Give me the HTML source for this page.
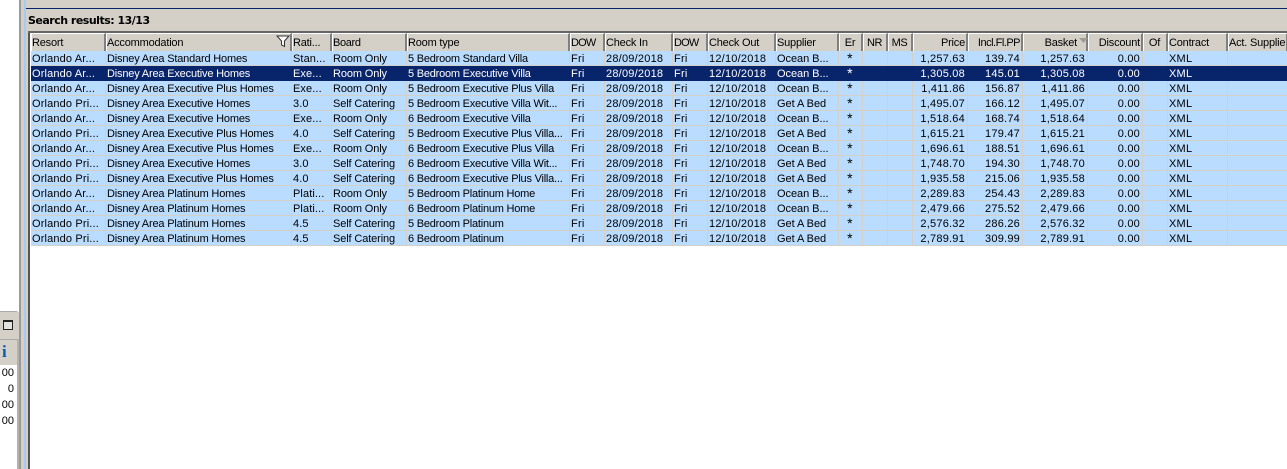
<!DOCTYPE html>
<html><head><meta charset="utf-8"><style>
html,body{margin:0;padding:0;background:#fff}
#p{position:relative;width:1287px;height:469px;overflow:hidden;background:#fff;font:11px "Liberation Sans",sans-serif;color:#000}
.a{position:absolute}
.c{position:absolute;white-space:nowrap;overflow:hidden;height:15px;line-height:17px;padding:0 2px 0 1px;box-sizing:border-box;border-right:1px solid #d4d0c8;border-bottom:1px solid #d4d0c8;letter-spacing:.22px}
.h{position:absolute;top:33px;height:18px;line-height:18px;box-sizing:border-box;background:#d4d0c8;border-top:1px solid #fff;border-left:1px solid #fff;border-right:2px solid #808080;padding:0 1px 0 0;white-space:nowrap;overflow:hidden;letter-spacing:-.2px}
.r{text-align:right}.m{text-align:center}
.s{background:#08246b;color:#fff}
.b{background:#b9dcff}
</style></head><body><div id="p">
<div class="a" style="left:19px;top:0;width:2px;height:469px;background:#9c9a96"></div>
<div class="a" style="left:21px;top:0;width:3px;height:469px;background:#d4d0c8"></div>
<div class="a" style="left:24px;top:0;width:2px;height:469px;background:#a6caf0"></div>
<div class="a" style="left:26px;top:0;width:2px;height:469px;background:#d4d0c8"></div>
<div class="a" style="left:28px;top:31px;width:2px;height:438px;background:#555"></div>
<div class="a" style="left:26px;top:0;width:1261px;height:31px;background:#d4d0c8"></div>
<div class="a" style="left:26px;top:8px;width:1261px;height:1px;background:#08246b"></div>
<div class="a" style="left:28px;top:14px;font:bold 11px/14px 'DejaVu Sans',sans-serif;letter-spacing:-.5px">Search results: 13/13</div>
<div class="a" style="left:28px;top:31px;width:1259px;height:2px;background:#666"></div>
<div class="a" style="left:0;top:311px;width:19px;height:158px;background:#d4d0c8;border-top:1px solid #aaa;box-sizing:border-box;border-top-right-radius:3px"></div>
<div class="a" style="left:0;top:339px;width:17px;height:1px;background:#aaa"></div>
<div class="a" style="left:17px;top:339px;width:2px;height:130px;background:#b4b2ae"></div>
<div class="a" style="left:0;top:365px;width:17px;height:104px;background:#fff"></div>
<div class="a" style="left:3px;top:320px;width:8px;height:7px;border:1px solid #222;border-top-width:2px;background:#e4e2de"></div>
<div class="a" style="left:2px;top:342px;font:bold 17px/20px 'Liberation Serif',serif;color:#0a5cb0">i</div>
<div class="a r" style="left:0;top:366px;width:14px;line-height:15px">00</div>
<div class="a r" style="left:0;top:382px;width:14px;line-height:15px">0</div>
<div class="a r" style="left:0;top:398px;width:14px;line-height:15px">00</div>
<div class="a r" style="left:0;top:414px;width:14px;line-height:15px">00</div>
<div id="t"></div>
<svg class="a" style="left:276px;top:35px" width="14" height="13" viewBox="0 0 14 13"><path d="M1 1H13L8.5 6V11.500L5.500 10V6Z" fill="#fff" stroke="#333"/></svg>
<svg class="a" style="left:1079px;top:38px" width="9" height="6" viewBox="0 0 9 6"><path d="M0 0H9L4.500 5Z" fill="#a09c94"/></svg>
</div>
<script>
var X=[30,105,291,331,406,569,604,672,707,775,838,862,887,912,967,1022,1087,1142,1167,1227,1287];
var H=["Resort","Accommodation","Rati...","Board","Room type","DOW","Check In","DOW","Check Out","Supplier","Er","NR","MS","Price","Incl.Fl.PP","Basket","Discount","Of","Contract","Act. Supplier"];
var A={10:"m",11:"m",12:"m",13:"r",14:"r",15:"r",16:"r",17:"m"};
var LS={0:.15,1:-.18,2:.1,3:-.12,4:-.22,9:-.05};
var HS={3:-.35,5:-.8,7:-.8,11:-.4,12:-.4,14:-.5};
var R=[
["Orlando Ar...","Disney Area Standard Homes","Stan...","Room Only","5 Bedroom Standard Villa","Ocean B...","1,257.63","139.74"],
["Orlando Ar...","Disney Area Executive Homes","Exe...","Room Only","5 Bedroom Executive Villa","Ocean B...","1,305.08","145.01"],
["Orlando Ar...","Disney Area Executive Plus Homes","Exe...","Room Only","5 Bedroom Executive Plus Villa","Ocean B...","1,411.86","156.87"],
["Orlando Pri...","Disney Area Executive Homes","3.0","Self Catering","5 Bedroom Executive Villa Wit...","Get A Bed","1,495.07","166.12"],
["Orlando Ar...","Disney Area Executive Homes","Exe...","Room Only","6 Bedroom Executive Villa","Ocean B...","1,518.64","168.74"],
["Orlando Pri...","Disney Area Executive Plus Homes","4.0","Self Catering","5 Bedroom Executive Plus Villa...","Get A Bed","1,615.21","179.47"],
["Orlando Ar...","Disney Area Executive Plus Homes","Exe...","Room Only","6 Bedroom Executive Plus Villa","Ocean B...","1,696.61","188.51"],
["Orlando Pri...","Disney Area Executive Homes","3.0","Self Catering","6 Bedroom Executive Villa Wit...","Get A Bed","1,748.70","194.30"],
["Orlando Pri...","Disney Area Executive Plus Homes","4.0","Self Catering","6 Bedroom Executive Plus Villa...","Get A Bed","1,935.58","215.06"],
["Orlando Ar...","Disney Area Platinum Homes","Plati...","Room Only","5 Bedroom Platinum Home","Ocean B...","2,289.83","254.43"],
["Orlando Ar...","Disney Area Platinum Homes","Plati...","Room Only","6 Bedroom Platinum Home","Ocean B...","2,479.66","275.52"],
["Orlando Pri...","Disney Area Platinum Homes","4.5","Self Catering","5 Bedroom Platinum","Get A Bed","2,576.32","286.26"],
["Orlando Pri...","Disney Area Platinum Homes","4.5","Self Catering","6 Bedroom Platinum","Get A Bed","2,789.91","309.99"]];
var o="";
for(var i=0;i<20;i++){
 var w=X[i+1]-X[i];
 o+='<div class="h '+(A[i]||"")+'" style="left:'+(X[i]+1)+'px;width:'+w+'px'+(i==15?';padding-right:9px':'')+(HS[i]?';letter-spacing:'+HS[i]+'px':'')+'">'+H[i]+'</div>';
}
R.forEach(function(r,j){
 var v=[r[0],r[1],r[2],r[3],r[4],"Fri","28/09/2018","Fri","12/10/2018",r[5],"*","","",r[6],r[7],r[6],"0.00","","XML",""];
 var y=51+j*15;
 for(var i=0;i<20;i++){
  var w=X[i+1]-X[i];
  o+='<div class="c '+(j==1?"s ":"b ")+(A[i]||"")+'" style="left:'+(X[i]+1)+'px;top:'+y+'px;width:'+w+'px'+(j==1?';border-color:#08246b':'')+(LS[i]!==undefined?';letter-spacing:'+LS[i]+'px':'')+(i==10?';font-size:14px;line-height:15px':'')+'">'+v[i]+'</div>';
 }
});
document.getElementById("t").innerHTML=o;
</script>
</body></html>
